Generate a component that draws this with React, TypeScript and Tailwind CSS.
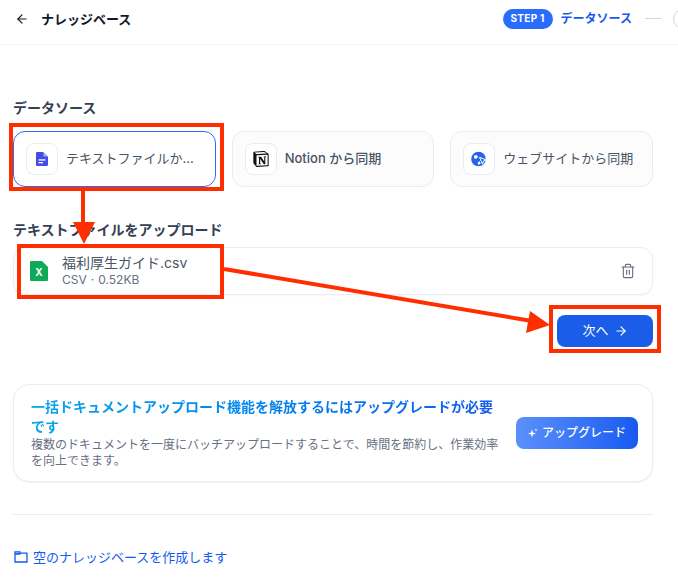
import React from "react";
import { ArrowLeft, ArrowRight, Trash2 } from "lucide-react";
import { SiNotion } from "react-icons/si";

const FONT = "font-['Inter','Noto_Sans_CJK_JP',sans-serif]";

const DocIcon = () => (
  <svg width="16" height="16" viewBox="0 0 16 16">
    <path d="M3.200 1h6l4.800 4.800v8A1.200 1.200 0 0 1 12.800 15H3.200A1.200 1.200 0 0 1 2 13.800V2.200A1.200 1.200 0 0 1 3.200 1z" fill="#444ce7" />
    <path d="M9.400 1v3.800a.8.800 0 0 0 .8.800H14z" fill="#a4a8f5" />
    <rect x="4.500" y="8.300" width="7" height="1.300" fill="#fff" />
    <rect x="4.500" y="11" width="4.500" height="1.300" fill="#fff" />
  </svg>
);

const GlobeIcon = () => (
  <svg width="16" height="16" viewBox="0 0 16 16">
    <circle cx="7.500" cy="8" r="7.300" fill="#2563eb" />
    <path d="M2.800 4.800l2.600-.9 1.600 1.700-1 2-2.500.2zM8.500 10l1.100 2.500-2 1.500-1-2.200z" fill="#fff" />
    <path d="M8.500 6.300l7 2.700-3 1-1 3.200z" fill="#2563eb" stroke="#fff" strokeWidth="1" />
  </svg>
);

const FolderIcon = () => (
  <svg width="14" height="14" viewBox="0 0 14 14" fill="none" stroke="#155aef" strokeWidth="1.300">
    <path d="M1 1.800h5v1.400h7v8.800H1z" />
    <path d="M1 3.800h5.500" strokeWidth="1.800" />
  </svg>
);

const SparkIcon = () => (
  <svg width="10" height="10" viewBox="0 0 10 10" fill="#fff">
    <path d="M4 1.500l1 3 3 1-3 1-1 3-1-3-3-1 3-1z" />
    <path d="M8 .500l.4 1.100 1.100.4-1.100.4L8 3.500l-.4-1.100L6.500 2l1.100-.4z" />
  </svg>
);

const SheetIcon = () => (
  <svg width="18" height="20" viewBox="0 0 18 20">
    <path d="M1 0h11l6 6v13a1 1 0 0 1-1 1H1a1 1 0 0 1-1-1V1a1 1 0 0 1 1-1z" fill="#0daa58" />
    <text x="9" y="14.500" textAnchor="middle" fontSize="10" fontWeight="700" fill="#fff" fontFamily="Inter">
      X
    </text>
  </svg>
);

const sources = [
  { label: "テキストファイルか...", icon: <DocIcon />, active: true },
  { label: "Notion から同期", icon: <SiNotion size={16} color="#111" />, active: false },
  { label: "ウェブサイトから同期", icon: <GlobeIcon />, active: false },
];

// red markup that was drawn on top of the screenshot
const Annotations = () => (
  <svg className="absolute inset-0 pointer-events-none" width="678" height="581" fill="none">
    <g stroke="#ff2e00" strokeWidth="4">
      <rect x="11" y="125" width="211" height="64" />
      <rect x="19" y="246" width="203" height="51" />
      <rect x="551" y="307" width="108" height="44" />
      <path d="M83 191V226" />
      <path d="M224 269L532 321" />
    </g>
    <path d="M73 222h22l-11 22z" fill="#ff2e00" />
    <path d="M550 325L530 311L526 333z" fill="#ff2e00" />
  </svg>
);

export default function App() {
  return (
    <div className={`${FONT} relative w-[678px] h-[581px] overflow-hidden bg-white`}>
      {/* Header */}
      <div className="flex items-center justify-between h-[45px] pb-[7px] pl-[15px] border-b border-[#f2f4f7] w-[678px]">
        <div className="flex items-center gap-3">
          <ArrowLeft size={14} strokeWidth={2} color="#101828" />
          <span className="text-[13px] leading-5 font-semibold text-[#101828]">ナレッジベース</span>
        </div>
        <div className="flex items-center shrink-0 -mr-[15px]">
          <span className="flex items-center justify-center w-[50px] h-5 rounded-full bg-[#296dff] text-[10px] font-bold tracking-[0.3px] text-white">
            STEP 1
          </span>
          <span className="ml-2 text-xs font-semibold text-[#155aef]">データソース</span>
          <span className="ml-[13px] w-4 h-px bg-[#d0d5dd]" />
          <span className="ml-3 w-5 h-5 rounded-full border border-[#d0d5dd]" />
        </div>
      </div>

      <div className="w-[640px] ml-[13px]">
        <div className="mt-[53px] text-sm leading-5 font-semibold text-[#354052]">データソース</div>

        <div className="grid grid-cols-3 gap-4 mt-[13px]">
          {sources.map((s) => (
            <div
              key={s.label}
              className={
                s.active
                  ? "flex items-center h-14 px-3 gap-2 rounded-xl border border-[#296dff] bg-white"
                  : "flex items-center h-14 px-3 gap-2 rounded-xl border border-[#eaecf0] bg-[#fcfcfd]"
              }
            >
              <span className="flex items-center justify-center w-8 h-8 rounded-lg border border-[#eaecf0] bg-white">
                {s.icon}
              </span>
              <span className={s.label.startsWith("Notion") ? "text-[13px] text-[#495464] font-medium" : "text-[13px] text-[#495464]"}>
                {s.label}
              </span>
            </div>
          ))}
        </div>

        <div className="mt-[33px] text-sm leading-5 font-semibold text-[#354052]">テキストファイルをアップロード</div>

        <div className="flex items-center justify-between h-12 mt-[7px] pl-4 pr-4 rounded-xl border border-[#eaecf0] bg-white shadow-[0_1px_2px_rgba(16,24,40,0.03)]">
          <div className="flex items-center gap-[14px]">
            <SheetIcon />
            <div className="flex flex-col">
              <span className="text-sm leading-[18px] text-[#495464]">福利厚生ガイド.csv</span>
              <span className="flex gap-1 text-xs leading-4 text-[#676f83]">
                <span>CSV</span>
                <span>·</span>
                <span>0.52KB</span>
              </span>
            </div>
          </div>
          <Trash2 size={16} strokeWidth={1.700} color="#676f83" />
        </div>

        <div className="flex justify-end mt-5">
          <button className="flex items-center justify-center gap-[5px] w-[96px] h-8 rounded-lg bg-[#1a5de8] text-[13px] text-white">
            次へ
            <ArrowRight size={14} strokeWidth={2} />
          </button>
        </div>

        <div className="flex items-center justify-between mt-[37px] h-[98px] pl-[17px] pr-[14px] rounded-2xl border border-[#eaecf0] bg-white shadow-[0_1px_2px_rgba(16,24,40,0.05)]">
          <div className="w-[470px]">
            <div className="text-sm leading-5 font-semibold text-transparent bg-clip-text bg-gradient-to-r from-[#0ba5ec] to-[#155aef]">
              一括ドキュメントアップロード機能を解放するにはアップグレードが必要です
            </div>
            <div className="text-xs leading-4 text-[#676f83]">
              複数のドキュメントを一度にバッチアップロードすることで、時間を節約し、作業効率を向上できます。
            </div>
          </div>
          <button className="flex items-center justify-center gap-1 w-[122px] h-8 rounded-lg bg-gradient-to-r from-[#5b8ffb] to-[#155aef] text-xs font-medium text-white">
            <SparkIcon />
            アップグレード
          </button>
        </div>

        <div className="mt-8 h-px bg-[#eaecf0]" />

        <div className="flex items-center gap-[5px] mt-8 pl-[1px] text-[13px] leading-5 text-[#155aef]">
          <FolderIcon />
          空のナレッジベースを作成します
        </div>
      </div>

      <Annotations />
    </div>
  );
}
